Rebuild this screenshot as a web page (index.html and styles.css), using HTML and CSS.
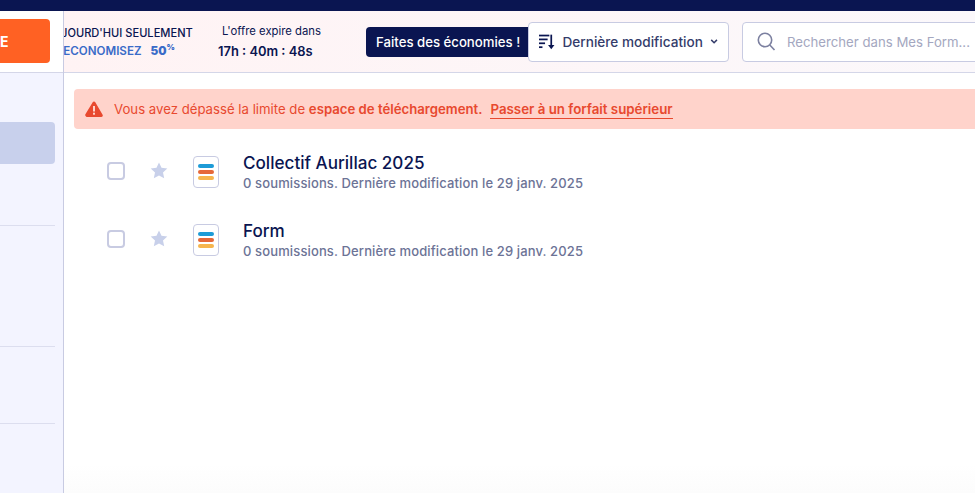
FILE: index.html
```html
<!DOCTYPE html>
<html lang="fr">
<head>
    <meta charset="UTF-8">
    <title>Mes Formulaires</title>
    <link rel="stylesheet" href="styles.css">
</head>
<body>
<div class="topbar"></div>
<div class="page">
    <aside class="sidebar">
        <div class="side-head">
            <button class="create-btn">E</button>
        </div>
        <div class="side-selected"></div>
        <div class="side-line line-a"></div>
        <div class="side-line line-b"></div>
        <div class="side-line line-c"></div>
    </aside>
    <main class="content">
        <header class="toolbar">
            <div class="promo-sale">
                <div class="promo-title">AUJOURD'HUI SEULEMENT</div>
                <div class="promo-off">ECONOMISEZ <b>50<sup>%</sup></b></div>
            </div>
            <div class="promo-timer">
                <div class="timer-label">L'offre expire dans</div>
                <div class="timer-value">17h : 40m : 48s</div>
            </div>
            <button class="save-btn">Faites des économies !</button>
            <button class="sort-btn">
                <svg width="19" height="18" viewBox="1 2 18 17" fill="#0a1551">
                    <rect x="1" y="2" width="12" height="2"/>
                    <rect x="1" y="6.5" width="10" height="2"/>
                    <rect x="1" y="11" width="7" height="2"/>
                    <rect x="1" y="15.5" width="4" height="2"/>
                    <rect x="14.2" y="2" width="2" height="14"/>
                    <path d="M11.5 14h7.400l-3.700 5z"/>
                </svg>
                <span class="sort-label">Dernière modification</span>
                <svg class="sort-caret" width="10" height="7" viewBox="0 0 10 7" fill="none" stroke="#343c6a" stroke-width="1.800">
                    <path d="M1.500 1.500l3.500 3.500 3.500-3.500"/>
                </svg>
            </button>
            <div class="search-box">
                <svg width="19" height="19" viewBox="0 0 19 19" fill="none" stroke="#7c80a0" stroke-width="1.600">
                    <circle cx="8" cy="8" r="6.700"/>
                    <path d="M12.800 13l4.700 5"/>
                </svg>
                <span class="search-text">Rechercher dans Mes Form...</span>
            </div>
        </header>
        <div class="alert">
            <svg width="18" height="16" viewBox="0 0 18 16">
                <path d="M9 .5c.6 0 1 .3 1.300.8l7.300 12.500c.6 1-.1 2.200-1.200 2.200H1.600C.5 15.500-.2 14.300.4 13.300L7.700 1.300C8 .8 8.400.5 9 .5z" fill="#e8492f"/>
                <rect x="8" y="5" width="2" height="5.500" fill="#ffd3cb"/>
                <rect x="8" y="11.700" width="2" height="2" fill="#ffd3cb"/>
            </svg>
            <span class="alert-text">Vous avez dépassé la limite de <b>espace de téléchargement.</b></span>
            <a class="alert-link">Passer à un forfait supérieur</a>
        </div>
        <ul class="form-list">
            <li class="form-row">
                <span class="check"></span>
                <svg class="star" width="18" height="17" viewBox="0 0 18 17"><path d="M9 .5l2.500 5.300 5.800.7-4.300 4 1.200 5.800L9 13.400l-5.200 2.900L5 10.500.7 6.500l5.800-.7z" fill="#c8d0ea"/></svg>
                <span class="form-icon"><i class="bar-blue"></i><i class="bar-red"></i><i class="bar-yellow"></i></span>
                <div class="form-info">
                    <div class="form-name">Collectif Aurillac 2025</div>
                    <div class="form-meta">0 soumissions. Dernière modification le 29 janv. 2025</div>
                </div>
            </li>
            <li class="form-row">
                <span class="check"></span>
                <svg class="star" width="18" height="17" viewBox="0 0 18 17"><path d="M9 .5l2.500 5.300 5.800.7-4.300 4 1.200 5.800L9 13.400l-5.200 2.900L5 10.500.7 6.500l5.800-.7z" fill="#c8d0ea"/></svg>
                <span class="form-icon"><i class="bar-blue"></i><i class="bar-red"></i><i class="bar-yellow"></i></span>
                <div class="form-info">
                    <div class="form-name">Form</div>
                    <div class="form-meta">0 soumissions. Dernière modification le 29 janv. 2025</div>
                </div>
            </li>
        </ul>
    </main>
</div>
</body>
</html>
```
FILE: styles.css
```css
* {
    box-sizing: border-box;
}

html, body {
    height: 100%;
}

body {
    margin: 0;
    overflow: hidden;
    background-color: #fff;
    font-family: "Inter", "Noto Sans", sans-serif;
    color: #0a1551;
}

.topbar {
    height: 11px;
    background-color: #0a1551;
}

.page {
    display: flex;
    height: 482px;
}

/* sidebar */
.sidebar {
    width: 64px;
    flex-shrink: 0;
    background-color: #f3f4ff;
    border-right: 1px solid #c8cbe2;
    overflow: hidden;
}

.side-head {
    height: 62px;
    padding-top: 8px;
    background-color: #fff;
    border-bottom: 1px solid #d4d6e8;
}

.create-btn {
    display: block;
    width: 50px;
    height: 44px;
    padding: 0 45px 0 0;
    border: none;
    border-radius: 0 4px 4px 0;
    background-color: #ff6123;
    color: #fff;
    font-family: inherit;
    font-size: 14px;
    font-weight: 700;
    text-align: right;
}

.side-selected {
    width: 55px;
    height: 42px;
    margin-top: 49px;
    border-radius: 0 4px 4px 0;
    background-color: #c8d0ec;
}

.side-line {
    width: 55px;
    height: 1px;
    background-color: #dcdeef;
}

.line-a {
    margin-top: 61px;
}

.line-b {
    margin-top: 120px;
}

.line-c {
    margin-top: 76px;
}

/* top toolbar */
.content {
    flex: 1;
    min-width: 0;
    overflow: hidden;
    background: linear-gradient(#fff 94%, #fcfcfc);
}

.toolbar {
    display: flex;
    align-items: center;
    height: 62px;
    background: linear-gradient(to right, #fff3f4, #fbf8fb);
    border-bottom: 1px solid #d4d6e8;
    white-space: nowrap;
}

.promo-sale {
    width: 150px;
    margin-left: -20px;
    flex-shrink: 0;
    text-align: center;
}

.promo-title {
    font-size: 11.100px;
    font-weight: 500;
    line-height: 18px;
}

.promo-off {
    color: #3a6bc8;
    font-size: 11.600px;
    font-weight: 600;
    line-height: 18px;
}

.promo-off b {
    margin-left: 6px;
}

.promo-off sup {
    font-size: 8px;
    line-height: 0;
}

.promo-timer {
    width: 110px;
    margin-left: 24px;
    flex-shrink: 0;
}

.timer-label {
    margin-left: 4px;
    font-size: 11.300px;
    line-height: 18px;
}

.timer-value {
    margin-top: 3px;
    font-size: 12.900px;
    font-weight: 600;
    line-height: 18px;
}

.save-btn {
    width: 172px;
    height: 30px;
    margin-left: 38px;
    padding: 1px 0 0 10px;
    flex-shrink: 0;
    border: none;
    border-radius: 4px;
    background-color: #0a1551;
    color: #fff;
    font-family: inherit;
    font-size: 13.200px;
    font-weight: 500;
    text-align: left;
}

.sort-btn {
    display: flex;
    align-items: center;
    width: 201px;
    height: 40px;
    margin-left: -10px;
    padding: 0 10px;
    flex-shrink: 0;
    position: relative;
    border: 1px solid #c8cbe2;
    border-radius: 4px;
    background-color: #fff;
    color: #343c6a;
    font-family: inherit;
    font-size: 13.600px;
    font-weight: 500;
}

.sort-label {
    margin-left: 8px;
}

.sort-caret {
    margin-left: 7px;
}

.search-box {
    display: flex;
    align-items: center;
    gap: 11px;
    width: 260px;
    height: 40px;
    margin-left: 13px;
    padding-left: 14px;
    flex-shrink: 0;
    border: 1px solid #c8cbe2;
    border-radius: 4px;
    background-color: #fff;
}

.search-text {
    color: #a4a7c0;
    font-size: 13.200px;
}

/* upgrade alert */
.alert {
    display: flex;
    align-items: center;
    height: 40px;
    margin: 16px 0 0 10px;
    padding-left: 11px;
    border-radius: 4px 0 0 4px;
    background-color: #ffd3cb;
    color: #e8492f;
    font-size: 13.200px;
    white-space: nowrap;
}

.alert-text {
    margin-left: 11px;
}

.alert-text b {
    font-weight: 600;
}

.alert-link {
    margin: 2px 0 0 8px;
    padding-bottom: 1px;
    font-size: 13.300px;
    font-weight: 600;
    border-bottom: 1px solid #e8492f;
}

/* forms */
.form-list {
    margin: 8px 0 0;
    padding: 0;
    list-style: none;
}

.form-row {
    display: flex;
    align-items: center;
    height: 68px;
    padding-left: 43px;
}

.check {
    width: 18px;
    height: 18px;
    border: 2px solid #c8cbe2;
    border-radius: 4px;
    background-color: #fff;
}

.star {
    margin: 0 0 2px 25px;
}

.form-icon {
    display: flex;
    flex-direction: column;
    justify-content: center;
    gap: 2px;
    width: 26px;
    height: 32px;
    margin: 2px 0 0 25px;
    padding: 0 4px;
    border: 1px solid #c8cbe2;
    border-radius: 4px;
    background-color: #fff;
}

.form-icon i {
    display: block;
    height: 4px;
    border-radius: 2px;
}

.bar-blue {
    background-color: #1d9bd7;
}

.bar-red {
    background-color: #e5683a;
}

.bar-yellow {
    background-color: #f6b54e;
}

.form-info {
    margin: 0 0 -1px 24px;
}

.form-name {
    font-size: 17.100px;
    font-weight: 500;
    line-height: 22px;
}

.form-meta {
    color: #6c7396;
    font-size: 13px;
    font-weight: 500;
    letter-spacing: .13px;
    line-height: 18px;
}
```
